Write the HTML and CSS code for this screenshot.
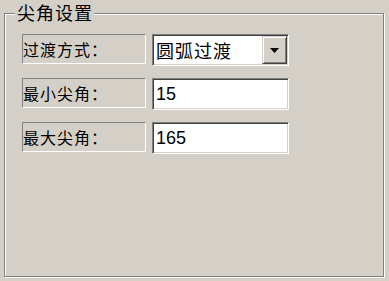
FILE: index.html
```html
<!DOCTYPE html>
<html>
<head>
<meta charset="utf-8">
<link rel="stylesheet" href="styles.css">
</head>
<body>
<div class="panel">
  <div class="group">
    <span class="title">尖角设置</span>
    <div class="rows">
      <div class="row">
        <div class="label">过渡方式：</div>
        <div class="field combo">
          <span class="value cjk">圆弧过渡</span>
          <span class="btn"><svg width="9" height="5" viewBox="0 0 9 5"><path d="M0 0H9L4.5 5Z" fill="#000"/></svg></span>
        </div>
      </div>
      <div class="row">
        <div class="label">最小尖角：</div>
        <div class="field"><span class="value">15</span></div>
      </div>
      <div class="row">
        <div class="label">最大尖角：</div>
        <div class="field"><span class="value">165</span></div>
      </div>
    </div>
  </div>
</div>
</body>
</html>
```

FILE: styles.css
```css
html, body {
  margin: 0;
  padding: 0;
  background: #d4d0c8;
}
body {
  font-family: "Noto Sans CJK SC", "Liberation Sans", sans-serif;
  color: #000;
}
.panel {
  width: 389px;
  height: 281px;
  box-sizing: border-box;
  padding: 13px 5px 4px 4px;
}
.group {
  height: 264px;
  box-sizing: border-box;
  border: 1px solid #808080;
  box-shadow: inset 1px 1px 0 #fff, 1px 1px 0 #fff;
}
.title {
  display: block;
  width: fit-content;
  margin: -12px 0 0 10px;
  padding: 0 1px 0 2px;
  background: #d4d0c8;
  font-size: 18px;
  letter-spacing: 1px;
  line-height: 21px;
}
.rows {
  padding: 11px 0 0 17px;
  display: flex;
  flex-direction: column;
  gap: 12px;
}
.row {
  display: flex;
  align-items: flex-start;
  gap: 6px;
  height: 32px;
}
.label {
  width: 124px;
  height: 30px;
  box-sizing: border-box;
  border-top: 1px solid #808080;
  border-left: 1px solid #808080;
  border-bottom: 1px solid #fff;
  border-right: 1px solid #fff;
  font-size: 16px;
  letter-spacing: 1px;
  line-height: 29px;
  white-space: nowrap;
}
.field {
  width: 137px;
  height: 32px;
  box-sizing: border-box;
  background: #fff;
  border-top: 1px solid #808080;
  border-left: 1px solid #808080;
  border-bottom: 1px solid #fff;
  border-right: 1px solid #fff;
  box-shadow: inset 1px 1px 0 #404040, inset -1px -1px 0 #d4d0c8;
  display: flex;
  align-items: center;
  padding-left: 3px;
}
.value {
  font-family: "Liberation Sans", "Noto Sans CJK SC", sans-serif;
  font-size: 18px;
  line-height: 20px;
  flex: 1;
}
.value.cjk {
  font-family: "Noto Sans CJK SC", sans-serif;
  font-size: 18px;
  letter-spacing: 1px;
}
.combo {
  padding: 1px 1px 1px 3px;
  align-items: stretch;
}
.combo .value {
  display: flex;
  align-items: center;
}
.btn {
  width: 25px;
  box-sizing: border-box;
  background: #d4d0c8;
  border-top: 1px solid #d4d0c8;
  border-left: 1px solid #d4d0c8;
  border-right: 1px solid #404040;
  border-bottom: 1px solid #404040;
  box-shadow: inset 1px 1px 0 #fff, inset -1px -1px 0 #808080;
  display: flex;
  align-items: center;
  justify-content: center;
}
.btn svg {
  display: block;
}
```
